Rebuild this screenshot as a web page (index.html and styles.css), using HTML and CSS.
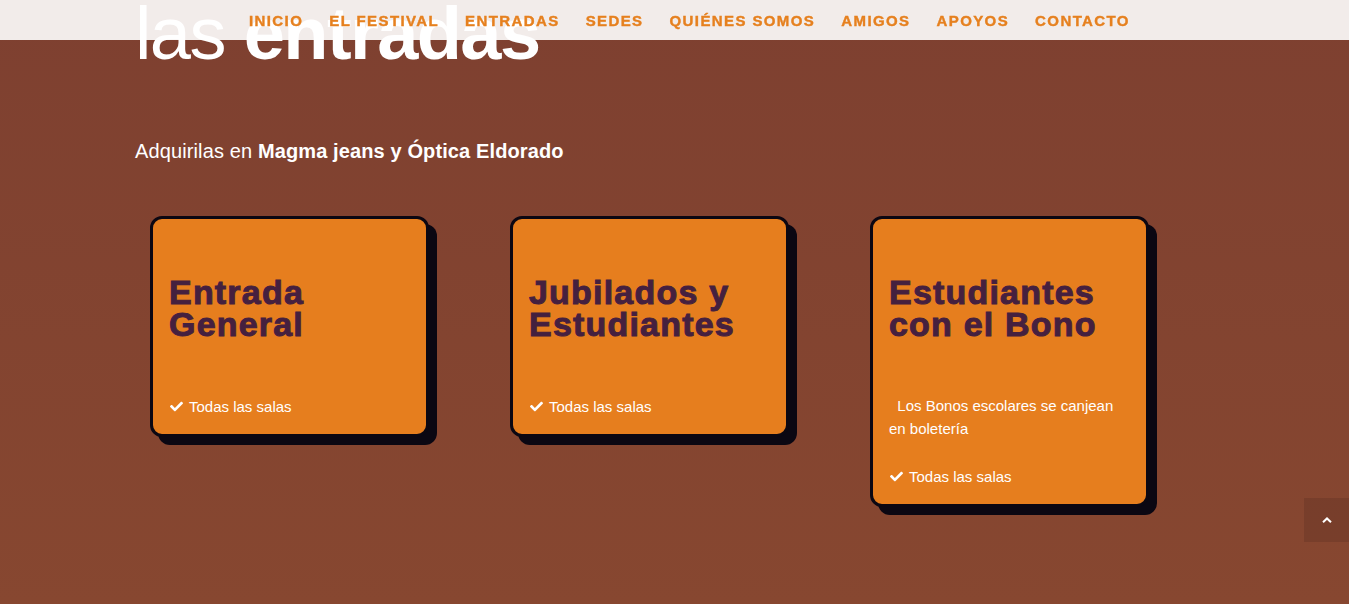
FILE: index.html
```html
<!DOCTYPE html>
<html lang="es">
<head>
<meta charset="utf-8">
<title>Entradas</title>
<link rel="stylesheet" href="styles.css">
</head>
<body>
<header class="site-header">
  <nav class="nav">
    <a class="nav-link" href="#">Inicio</a>
    <a class="nav-link" href="#">El festival</a>
    <a class="nav-link" href="#">Entradas</a>
    <a class="nav-link" href="#">Sedes</a>
    <a class="nav-link" href="#">Quiénes somos</a>
    <a class="nav-link" href="#">Amigos</a>
    <a class="nav-link" href="#">Apoyos</a>
    <a class="nav-link" href="#">Contacto</a>
  </nav>
</header>

<main class="content">
  <h1 class="hero-title">las <strong>entradas</strong></h1>
  <p class="lead">Adquirilas en <strong>Magma jeans y Óptica Eldorado</strong></p>

  <div class="cards">
    <div class="col">
      <div class="card">
        <h2 class="card-title">Entrada General</h2>
        <ul class="features">
          <li class="feature"><svg class="check" viewBox="0 0 512 512"><path d="M173.9 439.4l-166.4-166.4c-10-10-10-26.2 0-36.2l36.2-36.2c10-10 26.2-10 36.2 0L192 312.7 432.1 72.6c10-10 26.2-10 36.2 0l36.2 36.2c10 10 10 26.2 0 36.2l-294.4 294.4c-10 10-26.2 10-36.2 0z"/></svg>Todas las salas</li>
        </ul>
      </div>
    </div>
    <div class="col">
      <div class="card">
        <h2 class="card-title">Jubilados y Estudiantes</h2>
        <ul class="features">
          <li class="feature"><svg class="check" viewBox="0 0 512 512"><path d="M173.9 439.4l-166.4-166.4c-10-10-10-26.2 0-36.2l36.2-36.2c10-10 26.2-10 36.2 0L192 312.7 432.1 72.6c10-10 26.2-10 36.2 0l36.2 36.2c10 10 10 26.2 0 36.2l-294.4 294.4c-10 10-26.2 10-36.2 0z"/></svg>Todas las salas</li>
        </ul>
      </div>
    </div>
    <div class="col">
      <div class="card">
        <h2 class="card-title">Estudiantes con el Bono</h2>
        <p class="card-note">&nbsp; Los Bonos escolares se canjean en boletería</p>
        <ul class="features">
          <li class="feature"><svg class="check" viewBox="0 0 512 512"><path d="M173.9 439.4l-166.4-166.4c-10-10-10-26.2 0-36.2l36.2-36.2c10-10 26.2-10 36.2 0L192 312.7 432.1 72.6c10-10 26.2-10 36.2 0l36.2 36.2c10 10 10 26.2 0 36.2l-294.4 294.4c-10 10-26.2 10-36.2 0z"/></svg>Todas las salas</li>
        </ul>
      </div>
    </div>
  </div>
</main>

<a class="to-top" href="#" aria-label="Subir">
  <svg class="to-top-icon" viewBox="0 0 10 6"><path d="M1 5.2 L5 1.4 L9 5.2" fill="none" stroke="#fff" stroke-width="2"/></svg>
</a>
</body>
</html>
```

FILE: styles.css
```css
html, body {
  margin: 0;
  padding: 0;
}

body {
  min-height: 604px;
  background: linear-gradient(#7e4030, #874730);
  font-family: "Liberation Sans", Arial, sans-serif;
  color: #fff;
  overflow: hidden;
}

.site-header {
  position: fixed;
  top: 0;
  left: 0;
  right: 0;
  height: 40px;
  background: rgba(255, 255, 255, 0.9);
  z-index: 10;
}

.nav {
  display: flex;
  align-items: center;
  height: 40px;
  padding-left: 249px;
  gap: 26px;
}

.nav-link {
  color: #e6801f;
  text-decoration: none;
  text-transform: uppercase;
  font-weight: 700;
  font-size: 15px;
  letter-spacing: 1.4px;
  -webkit-text-stroke: 0.4px #e6801f;
}

.content {
  padding-left: 135px;
}

.hero-title {
  margin: -3px 0 0;
  font-size: 74px;
  line-height: 74px;
  font-weight: 400;
  letter-spacing: -1.6px;
  color: #fff;
}

.hero-title strong {
  font-weight: 700;
}

.lead {
  margin: 66px 0 0;
  font-size: 20px;
  line-height: 28px;
  letter-spacing: 0.12px;
}

.cards {
  display: grid;
  grid-template-columns: repeat(3, 360px);
  align-items: start;
  margin-top: 51px;
}

.col {
  padding-left: 15px;
}

.card {
  width: 273px;
  box-sizing: content-box;
  border: 3px solid #0b0712;
  border-radius: 12px;
  background: #e67e1e;
  box-shadow: 8px 8px 0 #0b0712;
  padding: 57px 0 16px 0;
}

.card-title {
  margin: 0 0 54px;
  padding: 0 16px;
  font-size: 34px;
  line-height: 32px;
  font-weight: 700;
  letter-spacing: 1.2px;
  color: #45203f;
  -webkit-text-stroke: 1px #45203f;
}

.card-note {
  margin: 0 0 24px;
  padding: 0 16px;
  font-size: 15px;
  line-height: 23px;
}

.features {
  list-style: none;
  margin: 0;
  padding: 0 16px;
}

.feature {
  display: flex;
  align-items: center;
  font-size: 15px;
  line-height: 23px;
  padding-top: 1px;
}

.check {
  width: 13px;
  height: 13px;
  fill: #fff;
  margin: 0 6px 0 1px;
}

.to-top {
  position: fixed;
  right: 0;
  bottom: 62px;
  width: 45px;
  height: 44px;
  background: rgba(0, 0, 0, 0.1);
  display: flex;
  align-items: center;
  justify-content: center;
}

.to-top-icon {
  width: 10px;
  height: 6px;
}
```
